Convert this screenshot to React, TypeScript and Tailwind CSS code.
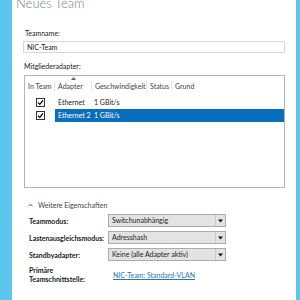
import React from 'react';

const font = { fontFamily: 'Lato, "Noto Sans", sans-serif' };

const Check: React.FC = () => (
  <div className="w-[9px] h-[9px] border border-[#333] bg-white flex items-center justify-center">
    <svg width="7" height="7" viewBox="0 0 7 7">
      <path d="M1 3.6 L2.8 5.4 L6 1.4" stroke="#000" strokeWidth="1.3" fill="none" />
    </svg>
  </div>
);

const Dropdown: React.FC<{ value: string }> = ({ value }) => (
  <div className="w-[118px] h-[13px] bg-[#e3e3e3] border border-[#acacac] flex items-center">
    <span className="flex-1 pl-[3px] text-[7px] leading-none text-[#222] truncate">{value}</span>
    <div className="w-[10px] h-full border-l border-[#c8c8c8] flex items-center justify-center">
      <svg width="5" height="4" viewBox="0 0 5 4">
        <path d="M0 0.5 H5 L2.5 3.5 Z" fill="#111" />
      </svg>
    </div>
  </div>
);

const App: React.FC = () => {
  const cols = [
    { label: 'In Team', w: 'w-[30px]' },
    { label: 'Adapter', w: 'w-[37px]' },
    { label: 'Geschwindigkeit', w: 'w-[55px]' },
    { label: 'Status', w: 'w-[25px]' },
    { label: 'Grund', w: 'w-[25px]' },
  ];

  return (
    <div className="w-[300px] h-[300px] overflow-hidden flex bg-white" style={font}>
      <div className="w-[12px] h-full bg-[#5bc5ec]" />
      <div className="flex-1 flex flex-col">
        <div className="-mt-[3px] pl-[4px] h-[12px] text-[13px] leading-[13px] font-light text-[#71848f] whitespace-nowrap">
          Neues Team
        </div>

        <div className="pl-[11px] pr-[11px] flex flex-col">
          <div className="mt-[19px] h-[10px] flex items-center pl-[2px] text-[7px] text-[#1a1a1a]">Teamname:</div>
          <div className="mt-[3px] h-[12px] border border-[#d6d6d6] flex items-center pl-[3px] text-[7px] text-[#1a1a1a]">
            NIC-Team
          </div>
          <div className="mt-[8px] h-[10px] flex items-center pl-[1px] text-[7px] text-[#1a1a1a]">Mitgliederadapter:</div>

          <div className="mt-[4px] ml-[1px] h-[113px] border border-[#b4b4b4] flex flex-col">
            <div className="h-[20px] flex items-center text-[7px] text-[#444]">
              {cols.map((c, i) => (
                <div key={c.label} className={`${c.w} relative h-[10px] flex items-center pl-[3px] whitespace-nowrap ${i < cols.length - 1 ? 'border-r border-[#e6e6e6]' : ''}`}>
                  {c.label}
                  {c.label === 'Adapter' && (
                    <svg className="absolute left-[16px] -top-[4px]" width="5" height="3" viewBox="0 0 5 3">
                      <path d="M0 3 L2.5 0 L5 3 Z" fill="#666" />
                    </svg>
                  )}
                </div>
              ))}
            </div>
            <div className="h-[13px] flex items-center text-[7px] text-[#1a1a1a]">
              <div className="w-[30px] flex justify-center pl-[1px]"><Check /></div>
              <div className="flex-1 h-full flex items-center">
                <span className="w-[37px] pl-[3px] whitespace-nowrap">Ethernet</span>
                <span className="pl-[2px] whitespace-nowrap">1 GBit/s</span>
              </div>
            </div>
            <div className="h-[13px] flex items-center text-[7px]">
              <div className="w-[30px] flex justify-center pl-[1px]"><Check /></div>
              <div className="flex-1 h-full flex items-center bg-[#0a6ebf] text-white">
                <span className="w-[37px] pl-[3px] whitespace-nowrap">Ethernet 2</span>
                <span className="pl-[2px] whitespace-nowrap">1 GBit/s</span>
              </div>
            </div>
          </div>

          <div className="mt-[12px] h-[10px] flex items-center pl-[5px] text-[7px] text-[#444]">
            <svg width="5" height="4" viewBox="0 0 5 4" className="mr-[5px]">
              <path d="M0.5 3.3 L2.5 1 L4.5 3.3" stroke="#555" strokeWidth="0.9" fill="none" />
            </svg>
            Weitere Eigenschaften
          </div>

          {[
            ['Teammodus:', 'Switchunabhängig'],
            ['Lastenausgleichsmodus:', 'Adresshash'],
            ['Standbyadapter:', 'Keine (alle Adapter aktiv)'],
          ].map(([label, value]) => (
            <div key={label} className="mt-[4px] h-[13px] flex items-center">
              <div className="w-[85px] pl-[6px] pt-[2px] text-[7px] font-bold text-[#1a1a1a] whitespace-nowrap">{label}</div>
              <Dropdown value={value} />
            </div>
          ))}

          <div className="mt-[5px] flex items-start">
            <div className="w-[85px] pl-[6px] text-[7px] leading-[9px] font-bold text-[#1a1a1a]">
              Primäre
              <br />
              Teamschnittstelle:
            </div>
            <a className="pt-[5px] pl-[5px] text-[7px] leading-[9px] text-[#2a72b8] underline whitespace-nowrap">
              NIC-Team: Standard-VLAN
            </a>
          </div>
        </div>
      </div>
      <div className="w-[4px] h-full bg-[#5bc5ec]" />
    </div>
  );
};

export default App;
